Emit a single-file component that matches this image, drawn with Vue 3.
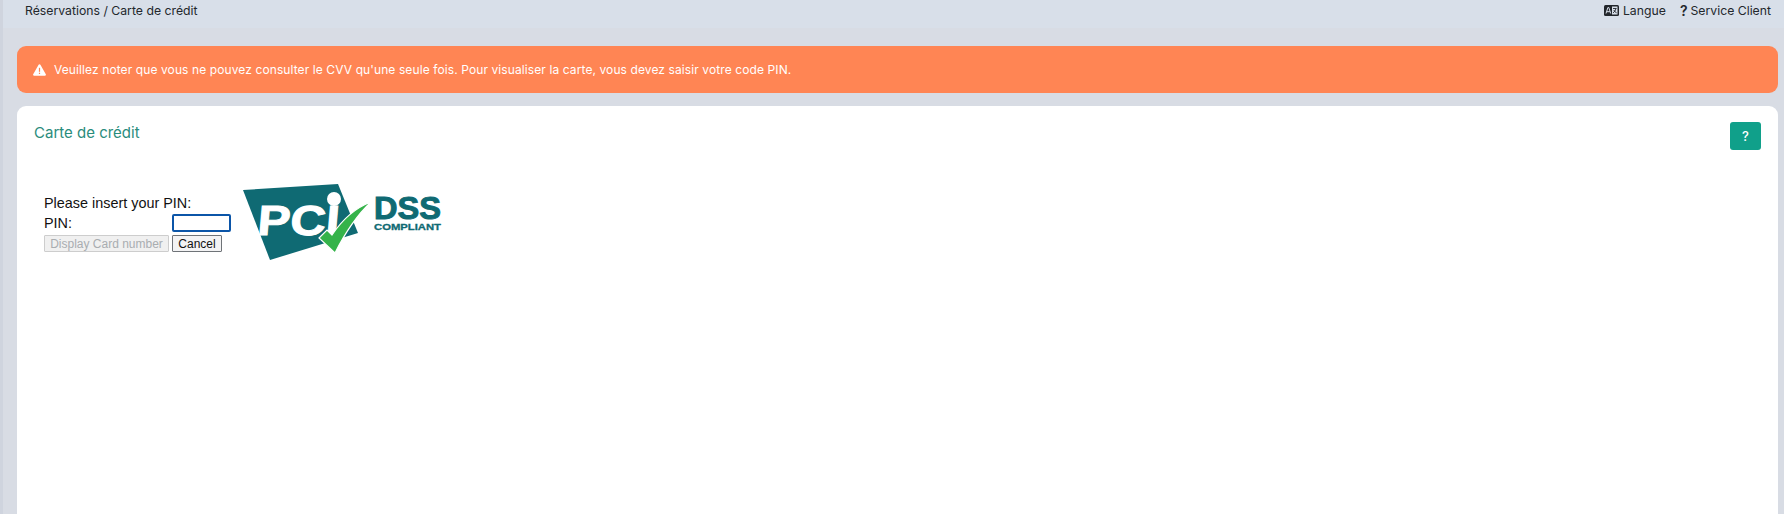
<script setup>
const title = 'Carte de crédit'
</script>

<template>
  <div class="page">
    <header class="topbar">
      <span class="crumb">Réservations / {{ title }}</span>
      <nav class="links">
        <span class="link lang-link">
          <svg class="lang" width="15" height="11" viewBox="0 0 15 11">
            <rect width="15" height="11" rx="1.5" fill="#22262b" />
            <rect x="8" y="1.5" width="5.5" height="8" fill="#d8dfe9" />
            <path d="M2 8.5 3.9 2.5h.9L6.7 8.500M2.900 6.700h3" fill="none" stroke="#d8dfe9" stroke-width="1" />
            <path d="M9 3.500h3.500M11.800 3.500c-.3 2-1.300 3.500-2.800 4.300M9.800 5c.5 1.300 1.500 2.300 2.800 2.800" fill="none" stroke="#22262b" stroke-width=".9" />
          </svg>
          Langue
        </span>
        <span class="link"><b class="q">?</b> Service Client</span>
      </nav>
    </header>

    <main class="content">
      <div class="alert">
        <svg width="13" height="12" viewBox="0 0 13 12">
          <path d="M5.600.700a1 1 0 0 1 1.800 0l5.400 9.600a1 1 0 0 1-.9 1.500H1.100a1 1 0 0 1-.9-1.500z" fill="#fff" />
          <rect x="5.900" y="3.800" width="1.200" height="4" fill="#ff8554" />
          <rect x="5.900" y="8.700" width="1.200" height="1.300" fill="#ff8554" />
        </svg>
        <span>Veuillez noter que vous ne pouvez consulter le CVV qu'une seule fois. Pour visualiser la carte, vous devez saisir votre code PIN.</span>
      </div>

      <section class="card">
        <div class="card-head">
          <h2>{{ title }}</h2>
          <button class="help" type="button">?</button>
        </div>
        <div class="pin-area">
          <form class="pin-form" @submit.prevent>
            <div class="prompt">Please insert your PIN:</div>
            <div class="row">
              <label for="pin">PIN:</label>
              <input id="pin" class="pin-input" type="password" />
            </div>
            <div class="row buttons">
              <button class="btn disabled" type="button" disabled>Display Card number</button>
              <button class="btn cancel" type="button">Cancel</button>
            </div>
          </form>
          <svg class="pci" width="200" height="84" viewBox="0 0 200 84">
            <path d="M0 6 95 0 115 49 27 76Z" fill="#0f6a73" />
            <text x="14" y="51" class="pci-letters" transform="skewX(-5) translate(4 0)" textLength="82" lengthAdjust="spacingAndGlyphs">PCI</text>
            <circle cx="91" cy="15" r="7" fill="#fff" />
            <path d="M76 54 84 46 89 51C99 36 112 24 128 18 113 32 102 49 92 69Z" fill="#35b34a" stroke="#fff" stroke-width="1.200" />
            <text x="131" y="35" class="pci-dss" textLength="67" lengthAdjust="spacingAndGlyphs">DSS</text>
            <text x="131" y="46" class="pci-comp" textLength="67" lengthAdjust="spacingAndGlyphs">COMPLIANT</text>
          </svg>
        </div>
      </section>
    </main>
  </div>
</template>

<style>
html, body { margin: 0; overflow: hidden; background: #d8dce4; }
</style>

<style scoped>
.page {
  width: 1784px;
  height: 514px;
  overflow: hidden;
  box-sizing: border-box;
  font-family: Inter, "Liberation Sans", sans-serif;
  background: #d8dce4;
  border-left: 3px solid #cfd4de;
}
.topbar {
  height: 28px;
  box-sizing: border-box;
  padding: 0 13px 8px 22px;
  background: #d8dfe9;
  display: flex;
  justify-content: space-between;
  align-items: center;
  font-size: 12.25px;
  color: #23272c;
}
.links { display: flex; gap: 14px; align-items: center; }
.link { display: flex; align-items: center; gap: 3px; }
.lang-link { gap: 4px; }
.q { font-weight: 600; font-size: 14px; }
.lang { display: block; }
.content { padding: 18px 6px 0 14px; }
.alert {
  height: 47px;
  box-sizing: border-box;
  padding: 0 16px;
  background: #ff8554;
  border-radius: 9px;
  color: #fff;
  font-size: 12px;
  letter-spacing: .1px;
  display: flex;
  align-items: center;
  gap: 8px;
}
.card {
  margin-top: 13px;
  height: 420px;
  background: #fff;
  border-radius: 9px;
  padding: 16px 17px 0 16px;
  box-sizing: border-box;
}
.card-head { display: flex; justify-content: space-between; align-items: flex-start; }
h2 {
  margin: 1px 0 0 1px;
  font-size: 15px;
  line-height: 20px;
  font-weight: 400;
  color: #2a8c7c;
}
.help {
  width: 31px;
  height: 28px;
  border: 0;
  border-radius: 3px;
  background: #10a08a;
  color: #fff;
  font: 500 13px Inter, sans-serif;
  padding: 0;
}
.pin-area {
  display: flex;
  align-items: flex-start;
  gap: 12px;
  margin-top: 32px;
  padding-left: 11px;
}
.pin-form {
  width: 187px;
  padding-top: 11px;
  font-family: "Liberation Sans", Arial, sans-serif;
  font-size: 14.4px;
  color: #111;
}
.prompt { line-height: 20px; }
.row { display: flex; align-items: center; gap: 3px; }
.row label { width: 125px; line-height: 20px; }
.pin-input {
  width: 59px;
  height: 18px;
  box-sizing: border-box;
  border: 2px solid #0b55a8;
  border-radius: 2px;
  outline: 0;
  padding: 0;
  background: #fff;
}
.buttons { margin-top: 2px; }
.btn {
  height: 17px;
  box-sizing: border-box;
  padding: 0 5px;
  border: 1px solid #6f7378;
  border-radius: 1px;
  background: #f3f3f4;
  color: #111;
  font: 12px "Liberation Sans", Arial, sans-serif;
  white-space: nowrap;
}
.cancel { width: 50px; padding: 0; }
.disabled {
  width: 125px;
  border-color: #cdcdcd;
  color: #a9adb0;
  background: #f0f0f0;
}
.pci { display: block; flex: none; margin-top: 2px; }
.pci-letters { font: 700 42px "Liberation Sans", Arial, sans-serif; fill: #fff; stroke: #fff; stroke-width: 1; }
.pci-dss { font: 700 32px "Liberation Sans", Arial, sans-serif; fill: #0f6a73; stroke: #0f6a73; stroke-width: 1; }
.pci-comp { font: 700 9.5px "Liberation Sans", Arial, sans-serif; fill: #0f6a73; stroke: #0f6a73; stroke-width: .3; }
</style>
